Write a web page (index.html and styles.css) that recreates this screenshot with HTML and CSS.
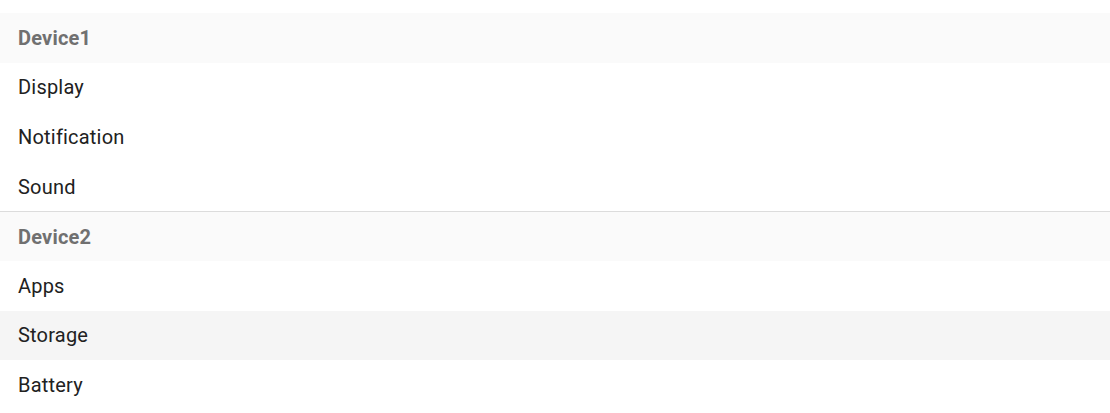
FILE: index.html
```html
<!DOCTYPE html>
<html>
<head>
<meta charset="utf-8">
<link rel="stylesheet" href="styles.css">
</head>
<body>
<ul class="list">
  <li class="group">
    <div class="header">Device1</div>
    <ul class="items">
      <li class="item">Display</li>
      <li class="item">Notification</li>
      <li class="item">Sound</li>
    </ul>
  </li>
  <li class="group divided">
    <div class="header">Device2</div>
    <ul class="items">
      <li class="item">Apps</li>
      <li class="item hover">Storage</li>
      <li class="item">Battery</li>
    </ul>
  </li>
</ul>
</body>
</html>
```
FILE: styles.css
```css
html, body {
  margin: 0;
  padding: 0;
  background: #ffffff;
}
body {
  font-family: Roboto, "Liberation Sans", Arial, sans-serif;
  padding-top: 13px;
}
ul {
  list-style: none;
  margin: 0;
  padding: 0;
}
.group.divided {
  border-top: 1px solid #dcdcdc;
}
.header {
  height: 49.6px;
  box-sizing: border-box;
  display: flex;
  align-items: center;
  padding-left: 18px;
  background: #fafafa;
  color: #707070;
  font-weight: 700;
  font-size: 20px;
  letter-spacing: 0.2px;
}
.divided .header {
  height: 48.6px;
}
.item {
  height: 49.6px;
  display: flex;
  align-items: center;
  padding-left: 18px;
  color: #212121;
  font-size: 20px;
  letter-spacing: 0.2px;
}
.item.hover {
  background: #f5f5f5;
}
```
